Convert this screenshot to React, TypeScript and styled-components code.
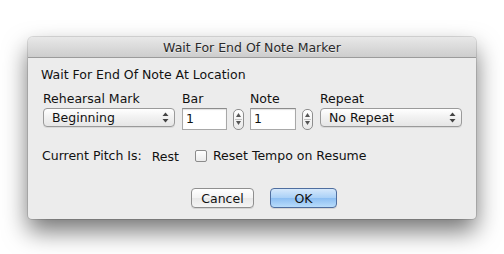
import React from "react"
import styled, { createGlobalStyle } from "styled-components"

const GlobalStyle = createGlobalStyle`
  html, body {
    margin: 0;
    padding: 0;
    background: #ffffff;
  }
  body {
    font-family: "DejaVu Sans", "Liberation Sans", sans-serif;
    font-size: 12.5px;
    color: #111;
  }
`

const Page = styled.div`
  box-sizing: border-box;
  min-height: 254px;
  padding: 37px 0 0 28px;
`

const Window = styled.div`
  width: 448px;
  background: #ececec;
  border-radius: 5px 5px 4px 4px;
  box-shadow: 0 12px 24px rgba(0, 0, 0, 0.55), 0 0 0 1px rgba(0, 0, 0, 0.12);
  overflow: hidden;
`

const TitleBar = styled.div`
  height: 20px;
  display: flex;
  align-items: center;
  justify-content: center;
  background: linear-gradient(#e8e8e8, #cdcdcd);
  border-bottom: 1px solid #9b9b9b;
  font-size: 12.5px;
  color: #2a2a2a;
  text-shadow: 0 1px 0 rgba(255, 255, 255, 0.5);
`

const Body = styled.div`
  display: flex;
  flex-direction: column;
  padding: 9px 13px 11px 13px;
`

const Text = styled.div`
  line-height: 16px;
  white-space: nowrap;
`

const FieldsRow = styled.div`
  display: flex;
  margin-top: 8px;
  padding-left: 2px;
`

const Field = styled.div<{ $width: number; $gap?: number }>`
  display: flex;
  flex-direction: column;
  width: ${({ $width }) => $width}px;
  margin-right: ${({ $gap = 0 }) => $gap}px;
`

const Label = styled.div`
  line-height: 16px;
  margin-bottom: 1px;
  white-space: nowrap;
`

const Popup = styled.div`
  height: 19px;
  display: flex;
  align-items: center;
  justify-content: space-between;
  box-sizing: border-box;
  padding: 0 5px 0 8px;
  background: linear-gradient(#ffffff, #f1f1f1 50%, #e6e6e6);
  border: 1px solid #9a9a9a;
  border-radius: 4px;
  box-shadow: 0 1px 0 rgba(0, 0, 0, 0.08);
`

const StepperRow = styled.div`
  display: flex;
  align-items: center;
  gap: 6px;
`

const Input = styled.div<{ $width: number }>`
  width: ${({ $width }) => $width}px;
  height: 22px;
  box-sizing: border-box;
  background: #ffffff;
  border: 1px solid #a8a8a8;
  border-top-color: #8c8c8c;
  box-shadow: inset 0 1px 1px rgba(0, 0, 0, 0.12);
  padding: 2px 0 0 3px;
  line-height: 16px;
`

const Stepper = styled.div`
  width: 11px;
  height: 21px;
  box-sizing: border-box;
  border: 1px solid #8e8e8e;
  border-radius: 5px;
  background: linear-gradient(#ffffff, #e9e9e9);
  display: flex;
  flex-direction: column;
  align-items: center;
  justify-content: space-around;
  padding: 2px 0;
  position: relative;
  &::after {
    content: "";
    position: absolute;
    left: 1px;
    right: 1px;
    top: 9px;
    height: 1px;
    background: #c2c2c2;
  }
`

const PitchRow = styled.div`
  display: flex;
  align-items: center;
  margin-top: 18px;
  padding-left: 1px;
`

const Value = styled.span`
  margin-left: 10px;
`

const Check = styled.label`
  display: flex;
  align-items: center;
  margin-left: 16px;
  gap: 6px;
  line-height: 16px;
`

const Box = styled.span`
  width: 12px;
  height: 12px;
  box-sizing: border-box;
  border: 1px solid #8b8b8b;
  border-radius: 2px;
  background: linear-gradient(#ffffff, #ebebeb);
`

const Buttons = styled.div`
  display: flex;
  justify-content: center;
  gap: 16px;
  margin-top: 24px;
  padding-left: 24px;
`

const Button = styled.div<{ $primary?: boolean; $width: number }>`
  width: ${({ $width }) => $width}px;
  height: 20px;
  box-sizing: border-box;
  display: flex;
  align-items: center;
  justify-content: center;
  border-radius: 4px;
  border: 1px solid ${({ $primary }) => ($primary ? "#4f6e9f" : "#8f8f8f")};
  background: ${({ $primary }) =>
    $primary
      ? "linear-gradient(#d5e8fb, #a9d0f7 50%, #8cbef2 51%, #b8dcfb)"
      : "linear-gradient(#ffffff, #f3f3f3 50%, #e8e8e8 51%, #f4f4f4)"};
  box-shadow: 0 1px 0 rgba(0, 0, 0, 0.1);
`

function Arrows() {
  return (
    <svg width="7" height="11" viewBox="0 0 7 11">
      <path d="M3.5 0.5 L6.5 4 L0.5 4 Z" fill="#444" />
      <path d="M3.5 10.5 L6.5 7 L0.5 7 Z" fill="#444" />
    </svg>
  )
}

function StepArrow({ down }: { down?: boolean }) {
  return (
    <svg width="5" height="4" viewBox="0 0 5 4">
      <path d={down ? "M0 0 L5 0 L2.5 4 Z" : "M2.5 0 L5 4 L0 4 Z"} fill="#555" />
    </svg>
  )
}

function NumberField({ width, value }: { width: number; value: string }) {
  return (
    <StepperRow>
      <Input $width={width}>{value}</Input>
      <Stepper>
        <StepArrow />
        <StepArrow down />
      </Stepper>
    </StepperRow>
  )
}

export default function App() {
  return (
    <>
      <GlobalStyle />
      <Page>
        <Window>
          <TitleBar>Wait For End Of Note Marker</TitleBar>
          <Body>
            <Text>Wait For End Of Note At Location</Text>
            <FieldsRow>
              <Field $width={132} $gap={7}>
                <Label>Rehearsal Mark</Label>
                <Popup>
                  Beginning
                  <Arrows />
                </Popup>
              </Field>
              <Field $width={62} $gap={6}>
                <Label>Bar</Label>
                <NumberField width={45} value="1" />
              </Field>
              <Field $width={63} $gap={7}>
                <Label>Note</Label>
                <NumberField width={46} value="1" />
              </Field>
              <Field $width={142}>
                <Label>Repeat</Label>
                <Popup>
                  No Repeat
                  <Arrows />
                </Popup>
              </Field>
            </FieldsRow>
            <PitchRow>
              <Text>Current Pitch Is:</Text>
              <Value>Rest</Value>
              <Check>
                <Box />
                Reset Tempo on Resume
              </Check>
            </PitchRow>
            <Buttons>
              <Button $width={63}>Cancel</Button>
              <Button $width={67} $primary>
                OK
              </Button>
            </Buttons>
          </Body>
        </Window>
      </Page>
    </>
  )
}
